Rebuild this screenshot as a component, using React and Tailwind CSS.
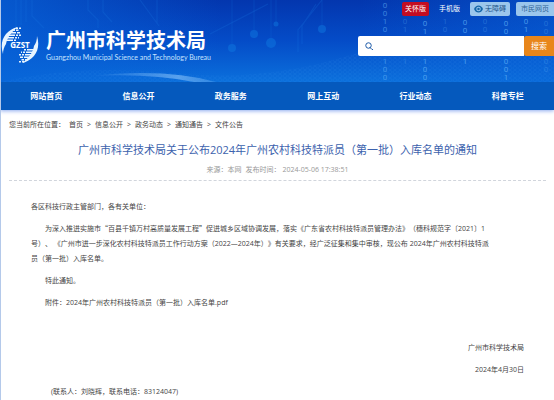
const navItems = ['网站首页', '信息公开', '政务服务', '网上互动', '行业动态', '科普专栏']

const crumbs = ['首页', '信息公开', '政务动态', '通知通告', '文件公告']

const circuits = [
  { x: 232, y: 48, r: 4 },
  { x: 254, y: 34, r: 4 },
  { x: 271, y: 43, r: 5 },
  { x: 276, y: 24, r: 2.5 },
  { x: 322, y: 29, r: 4 },
]

// each column is drawn in two runs, above and below the search box
const digitColumns = [
  { x: 385, top: 8, above: '0010', below: '100', opacity: 0.5 },
  { x: 405, top: 24, above: '01', below: '1', opacity: 0.25 },
  { x: 425, top: 26, above: '01', below: '100', opacity: 0.6 },
  { x: 445, top: 24, above: '10', below: '', opacity: 0.25 },
  { x: 465, top: 25, above: '00', below: '1', opacity: 0.6 },
  { x: 485, top: 24, above: '00', below: '', opacity: 0.25 },
  { x: 506, top: 26, above: '00', below: '001', opacity: 0.6 },
  { x: 526, top: 24, above: '01', below: '', opacity: 0.6 },
  { x: 546, top: 26, above: '00', below: '00', opacity: 0.25 },
]

const HeaderBackground = () => (
  <svg
    aria-hidden="true"
    className="absolute inset-0 h-full w-full"
    viewBox="0 0 554 82"
    preserveAspectRatio="xMaxYMid slice"
  >
    <defs>
      <linearGradient id="sky" x1="0" y1="0" x2="0" y2="1">
        <stop offset="0" stopColor="#0336ae" />
        <stop offset="0.5" stopColor="#044cc8" />
        <stop offset="1" stopColor="#0b70dc" />
      </linearGradient>
      <linearGradient id="side" x1="0" y1="0" x2="1" y2="0">
        <stop offset="0" stopColor="#0763d8" stopOpacity="0.75" />
        <stop offset="0.4" stopColor="#0763d8" stopOpacity="0" />
        <stop offset="0.65" stopColor="#0763d8" stopOpacity="0" />
        <stop offset="1" stopColor="#0763d8" stopOpacity="0.5" />
      </linearGradient>
      <linearGradient id="arc" x1="0" y1="0" x2="1" y2="0">
        <stop offset="0" stopColor="#79b7f5" stopOpacity="0" />
        <stop offset="0.7" stopColor="#79b7f5" stopOpacity="0.7" />
        <stop offset="1" stopColor="#79b7f5" stopOpacity="0.3" />
      </linearGradient>
      <pattern id="mesh" width="5" height="4" patternUnits="userSpaceOnUse">
        <path d="M0 2L2.5 0L5 2L2.5 4Z" fill="none" stroke="#4aa0f0" strokeWidth="0.4" />
      </pattern>
    </defs>
    <rect width="554" height="82" fill="url(#sky)" />
    <rect width="554" height="82" fill="url(#side)" />
    <path d="M0 82Q80 64 170 73T340 58T554 50V82Z" fill="url(#mesh)" opacity="0.25" />
    <path d="M90 76Q165 68 216 82L194 82Q150 73 90 76Z" fill="url(#arc)" />
    <g stroke="#1b7ae4" strokeWidth="1.2" fill="none" opacity="0.22">
      <path d="M16 0V28M21 0V25M26 0V22M32 0V16L44 28M88 0V10L98 20V28M103 0V12L112 22" />
      <path d="M140 0L159 26M157 0V24M210 34L268 4M322 0L298 30V52M316 4L302 26V44" />
    </g>
    {circuits.map((node) => (
      <g key={node.x} fill="#0f78e0" stroke="#1471dc" opacity="0.5">
        <path d={`M${node.x} 0V${node.y}`} strokeWidth="0.8" opacity="0.6" />
        <circle cx={node.x} cy={node.y} r={node.r} stroke="none" />
      </g>
    ))}
    {digitColumns.map((column) => (
      <g
        key={column.x}
        fill="#6fc0ff"
        fontFamily="Roboto, sans-serif"
        fontSize="8"
        textAnchor="middle"
        opacity={column.opacity}
      >
        {column.above.split('').map((digit, i) => (
          <text key={i} x={column.x} y={column.top + i * 8}>{digit}</text>
        ))}
        {column.below.split('').map((digit, i) => (
          <text key={i} x={column.x} y={64 + i * 8}>{digit}</text>
        ))}
      </g>
    ))}
  </svg>
)

const LogoWing = ({ transform }) => (
  <g transform={transform} fill="#e6f4ff">
    <path d="M2 28C-2 15 4 4 17 1C10 6 6 12 5 18C3 21 2 24 2 28Z" />
    <path d="M11 3.500H14V5H11ZM9 6H15V7.500H9ZM8 8.500H14V10H8ZM6 11H13V12.500H6ZM5 13.500H12V15H5Z" />
    <path d="M15 1.500H17V3H15ZM18 1.500H20V3H18ZM15 3.500H17.500V5H15ZM16 6H19V7.500H16ZM15 8.500H17V10H15ZM18 8.500H20V10H18ZM14 11H16V12.500H14ZM17 11H18V12.500H17ZM13 13.500H15V15H13Z" />
  </g>
)

const Logo = () => (
  <svg className="h-[38px] w-[38px] shrink-0" viewBox="0 0 38 38" role="img" aria-label="GZST">
    <LogoWing />
    <LogoWing transform="rotate(180 19 19)" />
    <text
      x="19"
      y="22"
      textAnchor="middle"
      fill="#fff"
      stroke="#0a5fd4"
      strokeWidth="1"
      paintOrder="stroke"
      fontFamily="Open Sans, sans-serif"
      fontSize="8"
      fontWeight="700"
    >
      GZST
    </text>
  </svg>
)

const EyeIcon = () => (
  <svg className="h-2 w-[9px]" viewBox="0 0 18 16" aria-hidden="true">
    <path d="M0 8Q3 1 9 1T18 8Q15 15 9 15T0 8Z" fill="#1466a8" />
    <circle cx="9" cy="8" r="4.500" fill="#9bc6ec" />
    <circle cx="9" cy="8" r="2.500" fill="#1466a8" />
  </svg>
)

const SearchIcon = () => (
  <svg className="h-2 w-2 shrink-0" viewBox="0 0 16 16" fill="none" stroke="#1c5aa8" strokeWidth="2" aria-hidden="true">
    <circle cx="7" cy="7" r="5.500" />
    <path d="M9 10L14 15H16" />
  </svg>
)

const Header = () => (
  <header className="relative h-[82px] overflow-hidden bg-[#0450cc]">
    <HeaderBackground />
    <div className="relative flex h-full justify-between">
      <a href="#" className="flex items-center gap-[7px] pt-2 pl-px text-white">
        <Logo />
        <span>
          <span className="block text-[20px] leading-6 font-bold">广州市科学技术局</span>
          <span className="block font-[Lato,sans-serif] text-[7px] leading-2 whitespace-nowrap text-[#c6e3ff]">
            Guangzhou Municipal Science and Technology Bureau
          </span>
        </span>
      </a>
      <div className="flex w-[196px] flex-col items-end gap-5 pt-0.5">
        <div className="flex h-3.5 items-stretch text-[7px] leading-3.5 whitespace-nowrap">
          <a href="#" className="mr-2.5 rounded-xs bg-[#c30d23] px-[3px] text-white">关怀版</a>
          <a href="#" className="mr-2.5 text-white">手机版</a>
          <a href="#" className="mr-1.5 flex items-center gap-0.5 rounded-xs bg-[#9bc6ec] px-1 text-[#1d5488]">
            <EyeIcon />
            无障碍
          </a>
          <a href="#" className="rounded-l-xs bg-[#9bc6ec] px-[5px] text-[#2f6496]">市民网页</a>
        </div>
        <form className="flex h-5 w-full" onSubmit={(e) => e.preventDefault()}>
          <label className="flex min-w-0 flex-1 items-center gap-1 rounded-l-xs bg-white px-[7px]">
            <SearchIcon />
            <input type="search" aria-label="搜索" className="w-full min-w-0 text-[8px] outline-none" />
          </label>
          <button type="submit" className="w-[30px] rounded-l-xs bg-[#e8861a] text-[8px] text-white">搜索</button>
        </form>
      </div>
    </div>
  </header>
)

const Article = () => (
  <article>
    <div className="mx-2 border-b border-dashed border-gray-300 pb-1 text-center">
      <h1 className="text-[11px] leading-5 text-[#3c62ad]">
        广州市科学技术局关于公布2024年广州农村科技特派员（第一批）入库名单的通知
      </h1>
      <p className="flex justify-center gap-1 pt-1 text-[7px] leading-3 text-[#999]">
        <span>来源：本网</span>
        <span>发布时间： 2024-05-06 17:38:51</span>
      </p>
    </div>
    <div className="space-y-[7px] px-[30px] pt-[18px] text-[7px] leading-[15px] text-[#444]">
      <p>各区科技行政主管部门，各有关单位：</p>
      <p className="indent-[2em] whitespace-nowrap">
        为深入推进实施市
        <span className="font-['Noto_Sans_CJK_SC',sans-serif]">“百县千镇万村高质量发展工程”</span>
        促进城乡区域协调发展，落实《广东省农村科技特派员管理办法》（穗科规范字〔2021〕1
        <br />
        号）、 《广州市进一步深化农村科技特派员工作行动方案（2022—2024年）》有关要求，经广泛征集和集中审核，现公布 2024年广州农村科技特派
        <br />
        员（第一批）入库名单。
      </p>
      <p className="indent-[2em]">特此通知。</p>
      <p className="indent-[2em]">
        附件：<a href="#">2024年广州农村科技特派员（第一批）入库名单.pdf</a>
      </p>
      <div className="space-y-[7px] pt-[23px] text-right">
        <p>广州市科学技术局</p>
        <p>2024年4月30日</p>
      </div>
      <p className="pl-5">(联系人：刘晓辉，联系电话：83124047)</p>
    </div>
  </article>
)

const App = () => (
  <div
    lang="zh-CN"
    className="min-h-screen overflow-hidden border-l border-[#b4c9ea] bg-white font-['Open_Sans','Noto_Sans_CJK_SC',sans-serif] [text-spacing-trim:space-all]"
  >
    <div className="-ml-px">
      <Header />
      <nav className="grid h-7 grid-cols-6 bg-[#0559bd] text-center text-[8px] leading-7 font-bold text-white shadow-[0_1px_4px_#8ba9ef]">
        {navItems.map((item) => (
          <a key={item} href="#">{item}</a>
        ))}
      </nav>
    </div>
    <div className="flex items-center gap-1 pt-[7px] pb-2 pl-2 text-[7px] leading-[15px] text-[#444]">
      <span>您当前所在位置：</span>
      {crumbs.map((crumb, index) => (
        <span key={crumb} className="flex gap-1">
          {index > 0 && <span>&gt;</span>}
          <a href="#">{crumb}</a>
        </span>
      ))}
    </div>
    <Article />
  </div>
)

export default App
